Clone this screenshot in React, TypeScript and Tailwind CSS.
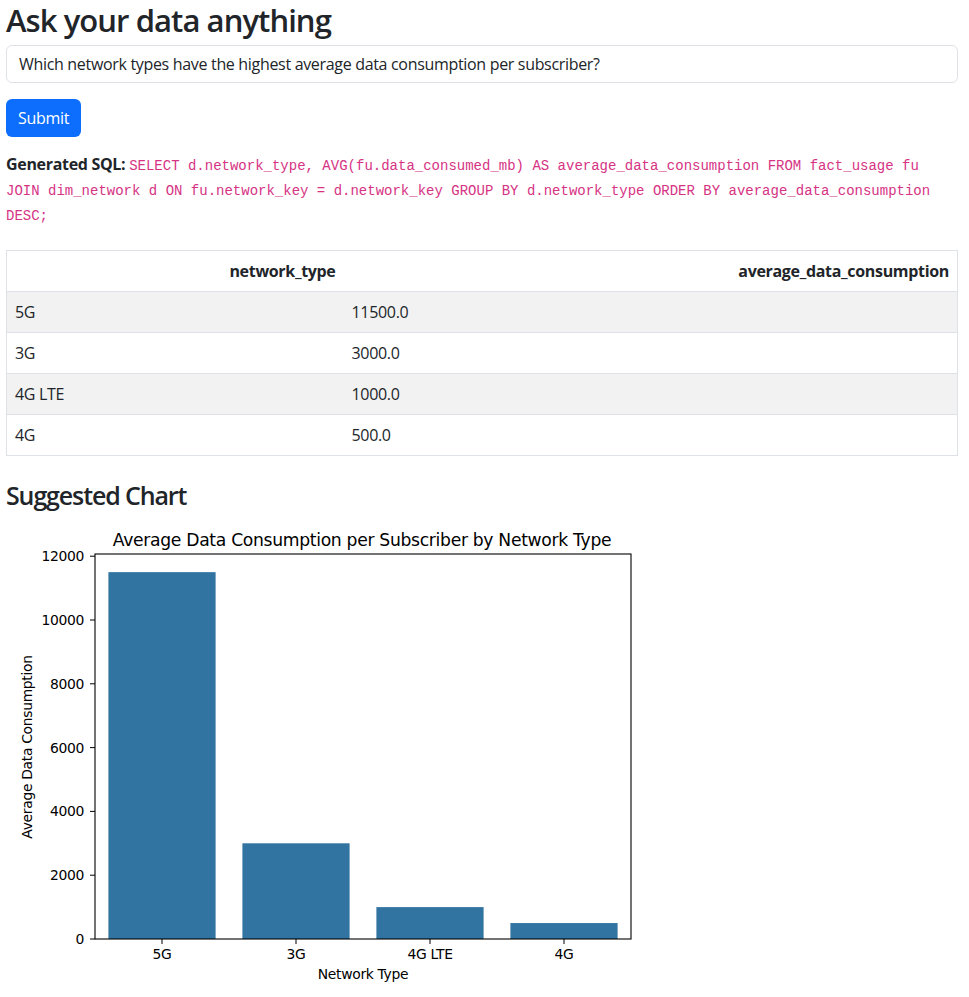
import React from "react";

const rows = [
  { type: "5G", avg: "11500.0" },
  { type: "3G", avg: "3000.0" },
  { type: "4G LTE", avg: "1000.0" },
  { type: "4G", avg: "500.0" },
];

const bars = [
  { label: "5G", value: 11500 },
  { label: "3G", value: 3000 },
  { label: "4G LTE", value: 1000 },
  { label: "4G", value: 500 },
];

// chart geometry, in page pixels (the svg viewBox uses page coords)
const AX_LEFT = 95;
const AX_RIGHT = 631;
const AX_TOP = 554;
const AX_BOTTOM = 939;
const PX_PER_UNIT = 63.8 / 2000;
const STEP = (AX_RIGHT - AX_LEFT) / 4;
const BAR_W = STEP * 0.8;

function BarChart() {
  const chartFont = "'DejaVu Sans', sans-serif";
  return (
    <svg width={640} height={477} viewBox="6 520 640 477" className="block">
      <text
        x={362}
        y={546}
        textAnchor="middle"
        fontSize={17.2}
        fontFamily={chartFont}
        fill="#000"
      >
        Average Data Consumption per Subscriber by Network Type
      </text>

      {bars.map((b, i) => {
        const cx = AX_LEFT + STEP * (i + 0.5);
        const h = b.value * PX_PER_UNIT;
        return (
          <g key={b.label}>
            <rect x={cx - BAR_W / 2} y={AX_BOTTOM - h} width={BAR_W} height={h} fill="#3274a1" />
            <line x1={cx} x2={cx} y1={AX_BOTTOM} y2={AX_BOTTOM + 5} stroke="#000" strokeWidth={1} />
            <text x={cx} y={959} textAnchor="middle" fontSize={13.9} fontFamily={chartFont} fill="#000">
              {b.label}
            </text>
          </g>
        );
      })}

      {[0, 2000, 4000, 6000, 8000, 10000, 12000].map((t) => {
        const y = AX_BOTTOM - t * PX_PER_UNIT;
        return (
          <g key={t}>
            <line x1={AX_LEFT - 5} x2={AX_LEFT} y1={y} y2={y} stroke="#000" strokeWidth={1} />
            <text x={84} y={y + 5} textAnchor="end" fontSize={13.9} fontFamily={chartFont} fill="#000">
              {t}
            </text>
          </g>
        );
      })}

      <rect
        x={AX_LEFT}
        y={AX_TOP}
        width={AX_RIGHT - AX_LEFT}
        height={AX_BOTTOM - AX_TOP}
        fill="none"
        stroke="#000"
        strokeWidth={1.1}
      />

      <text x={363} y={979} textAnchor="middle" fontSize={13.9} fontFamily={chartFont} fill="#000">
        Network Type
      </text>
      <text
        x={32}
        y={747}
        textAnchor="middle"
        fontSize={13.9}
        fontFamily={chartFont}
        fill="#000"
        transform="rotate(-90 32 747)"
      >
        Average Data Consumption
      </text>
    </svg>
  );
}

export default function App() {
  return (
    <div
      className="min-h-[997px] bg-white px-[6px] text-base tracking-[-0.02em] text-[#212529]"
      style={{ fontFamily: "'Open Sans', 'Noto Sans', sans-serif" }}
    >
      <h1 className="m-0 pt-0 text-[31px] font-semibold leading-[40px] tracking-[-0.03em] mb-[5px]">
        Ask your data anything
      </h1>

      <input
        type="text"
        readOnly
        value="Which network types have the highest average data consumption per subscriber?"
        className="block h-[38px] w-[952px] rounded-[6px] border border-[#dee2e6] bg-white px-3 text-base tracking-[-0.02em] text-[#212529] outline-none"
      />

      <button className="mt-4 h-[38px] rounded-[6px] bg-[#0d6efd] px-3 text-base text-white">Submit</button>

      <p className="mt-[15px] mb-[23px] leading-[25px]">
        <strong className="font-bold">Generated SQL:</strong>{" "}
        <code
          className="text-[14px] leading-none tracking-normal text-[#d63384]"
          style={{ fontFamily: "'Liberation Mono', monospace" }}
        >
          SELECT d.network_type, AVG(fu.data_consumed_mb) AS average_data_consumption FROM fact_usage fu
          <br />
          JOIN dim_network d ON fu.network_key = d.network_key GROUP BY d.network_type ORDER BY average_data_consumption
          <br />
          DESC;
        </code>
      </p>

      <table className="w-[952px] border-collapse border border-[#dee2e6]">
        <thead>
          <tr className="border-b border-[#dee2e6]">
            <th className="w-[337px] px-2 py-2 text-right font-bold leading-6">network_type</th>
            <th className="px-2 py-2 text-right font-bold leading-6">average_data_consumption</th>
          </tr>
        </thead>
        <tbody>
          {rows.map((r, i) => (
            <tr key={r.type} className={`border-b border-[#dee2e6] ${i % 2 === 0 ? "bg-[#f2f2f2]" : "bg-white"}`}>
              <td className="px-2 py-2 leading-6">{r.type}</td>
              <td className="px-2 py-2 leading-6">{r.avg}</td>
            </tr>
          ))}
        </tbody>
      </table>

      <h3 className="mt-6 mb-[9px] text-[25px] font-semibold leading-[31px] tracking-[-0.045em]">Suggested Chart</h3>

      <BarChart />
    </div>
  );
}
